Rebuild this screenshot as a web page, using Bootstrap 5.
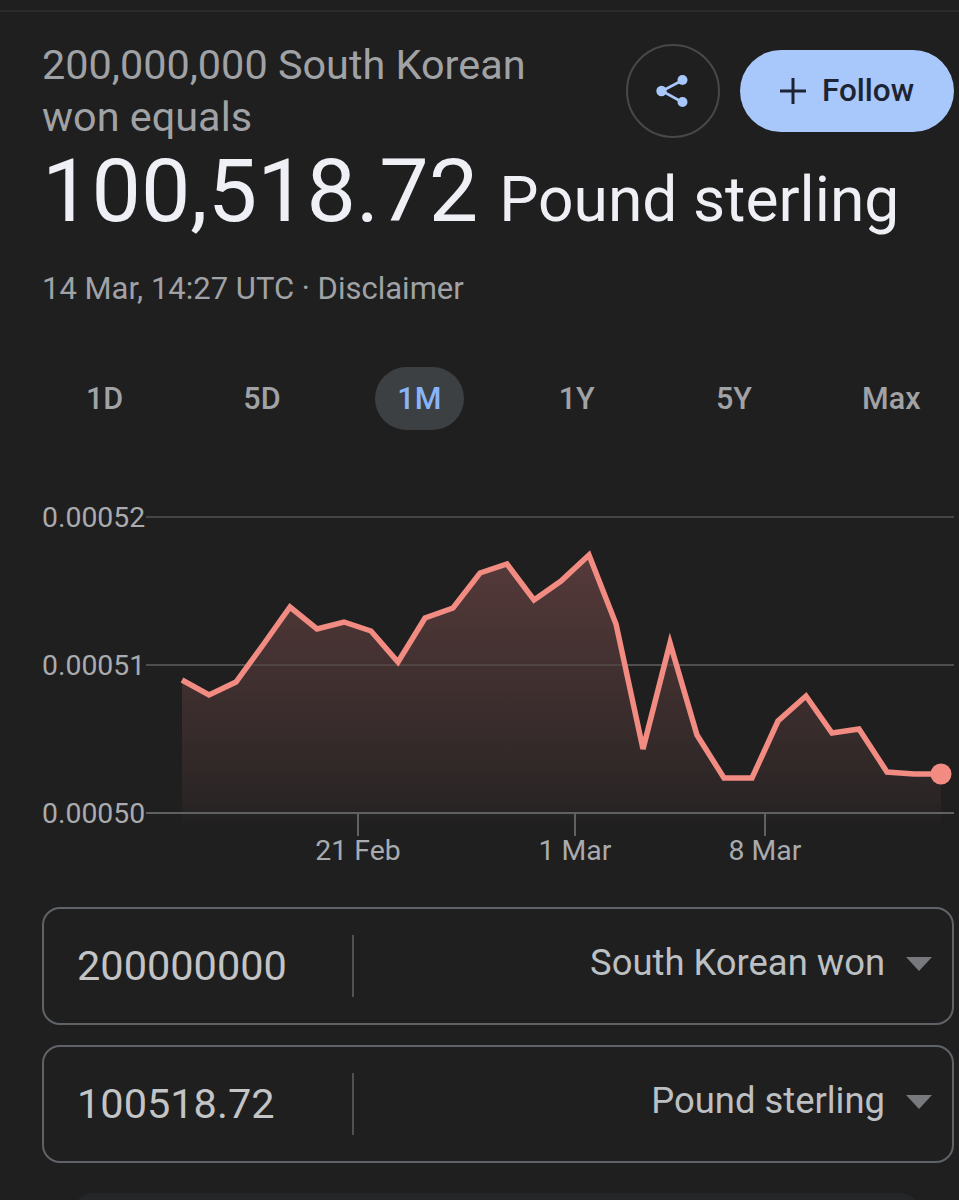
<!DOCTYPE html>
<html lang="en">
<head>
    <meta charset="UTF-8">
    <meta name="viewport" content="width=device-width, initial-scale=1.0">
    <title>200,000,000 South Korean won to Pound sterling</title>
    <link href="https://cdn.jsdelivr.net/npm/bootstrap@5.3.0/dist/css/bootstrap.min.css" rel="stylesheet">
    <style>
        body {
            background: #1f1f1f;
            color: #e8eaed;
            font-family: Roboto, "Liberation Sans", sans-serif;
            overflow-x: hidden;
        }
        .top-rule {
            height: 2px;
            margin-top: 10px;
            background: #2b2c2e;
        }
        .page-head {
            padding: 27px 5px 0 42px;
            height: 126px;
        }
        .pair-title {
            width: 500px;
            font-size: 41.4px;
            line-height: 52px;
            color: #a0a2a5;
        }
        .head-actions {
            margin-top: 5px;
        }
        .share-btn {
            width: 94px;
            height: 94px;
            border: 2px solid #474849;
            background: transparent;
        }
        .follow-btn {
            width: 214px;
            height: 82px;
            margin-left: 20px;
            background: #a8c7fa;
            border: 0;
            color: #1c2433;
            font-size: 31.5px;
            font-weight: 500;
        }
        .rate-line {
            padding-left: 42px;
            margin-top: -1px;
            height: 107px;
            white-space: nowrap;
            line-height: 107px;
            color: #eef0f5;
        }
        .rate-num { font-size: 88px; }
        .rate-cur { font-size: 62.3px; margin-left: 17px; }
        .rate-meta {
            padding-left: 42px;
            margin-top: 25px;
            font-size: 31px;
            line-height: 40px;
            color: #a0a2a5;
        }
        .range-row {
            width: 944px;
            margin: 58px 0 0 26px;
            font-size: 30.5px;
            font-weight: 500;
            color: #a0a2a5;
        }
        .range-pick {
            display: inline-block;
            line-height: 63px;
            padding: 0 18px;
        }
        .range-on {
            background: #3c4043;
            color: #8ab4f8;
            border-radius: 32px;
            padding: 0 22.5px;
        }
        .rate-chart {
            display: block;
            margin-top: 60px;
        }
        .rate-chart text {
            font-family: Roboto, "Liberation Sans", sans-serif;
            font-size: 28.4px;
            fill: #a9abae;
        }
        .conv-list {
            padding: 37px 5px 0 42px;
        }
        .conv-box {
            height: 118px;
            margin-bottom: 20px;
            border: 2px solid #5f6368;
            border-radius: 18px;
            padding-left: 33px;
            background: transparent;
        }
        .conv-val {
            width: 275px;
            font-size: 41.5px;
            color: #c2c4c6;
        }
        .conv-rule {
            width: 2px;
            height: 62px;
            background: #4f5254;
        }
        .conv-cur {
            font-size: 36.4px;
            color: #bdc0c3;
            margin-top: -6px;
        }
        .conv-arrow {
            width: 0;
            height: 0;
            margin: -4px 20px 0 21px;
            border-left: 13px solid transparent;
            border-right: 13px solid transparent;
            border-top: 14px solid #77797c;
        }
        .next-peek {
            height: 40px;
            margin: 30px 39px 0 73px;
            background: #252628;
            border-radius: 20px 20px 0 0;
        }
    </style>
</head>
<body>
    <div class="top-rule"></div>

    <div class="page-head d-flex align-items-start">
        <div class="pair-title">200,000,000 South Korean won equals</div>
        <div class="head-actions d-flex align-items-center ms-auto">
            <button type="button" class="btn rounded-circle share-btn d-flex align-items-center justify-content-center p-0" aria-label="Share">
                <svg width="36" height="36" viewBox="0 0 36 36">
                    <path d="M27 7.5 7 18 27 29" fill="none" stroke="#a8c7fa" stroke-width="2.6"/>
                    <circle cx="27.5" cy="7" r="5" fill="#a8c7fa"/>
                    <circle cx="6.5" cy="18" r="5.2" fill="#a8c7fa"/>
                    <circle cx="27.5" cy="29" r="5" fill="#a8c7fa"/>
                </svg>
            </button>
            <button type="button" class="btn rounded-pill follow-btn d-flex align-items-center justify-content-center p-0">
                <svg class="me-3" width="26" height="26" viewBox="0 0 26 26">
                    <path d="M13 0v26M0 13h26" fill="none" stroke="#1c2433" stroke-width="3"/>
                </svg>
                Follow
            </button>
        </div>
    </div>

    <div class="rate-line"><span class="rate-num">100,518.72</span> <span class="rate-cur">Pound sterling</span></div>
    <div class="rate-meta">14 Mar, 14:27 UTC · Disclaimer</div>

    <div class="row g-0 text-center range-row">
        <div class="col-2"><span class="range-pick">1D</span></div>
        <div class="col-2"><span class="range-pick">5D</span></div>
        <div class="col-2"><span class="range-pick range-on">1M</span></div>
        <div class="col-2"><span class="range-pick">1Y</span></div>
        <div class="col-2"><span class="range-pick">5Y</span></div>
        <div class="col-2"><span class="range-pick">Max</span></div>
    </div>

    <!-- viewBox keeps the page's y values, easier to read points off the picture -->
    <svg class="rate-chart" width="959" height="380" viewBox="0 490 959 380">
        <defs>
            <linearGradient id="areaFill" gradientUnits="userSpaceOnUse" x1="0" y1="555" x2="0" y2="828">
                <stop offset="0" stop-color="#563a3a"/>
                <stop offset="0.9" stop-color="#2b2525"/>
                <stop offset="1" stop-color="#1f1f1f"/>
            </linearGradient>
        </defs>

        <path d="M146 517H954M146 665H954" stroke="#434547" stroke-width="2"/>

        <polygon fill="url(#areaFill)" points="182,680 209,695 236,682 263,645 290,607 317,629 344,622 371,631 398,662 425,618 453,608 480,573 507,564 534,600 561,581 589,555 616,624 643,749 670,643 697,735 724,778 752,778 778,721 806,696 832,733 859,729 887,772 914,774 941,774 941,828 182,828"/>
        <path d="M146 665H954" stroke="#5a5553" stroke-width="2" opacity="0.55"/>
        <path d="M146 813H954M358 813V836M575 813V836M765 813V836" stroke="#5f6163" stroke-width="2"/>

        <polyline fill="none" stroke="#f28b82" stroke-width="5.5" points="182,680 209,695 236,682 263,645 290,607 317,629 344,622 371,631 398,662 425,618 453,608 480,573 507,564 534,600 561,581 589,555 616,624 643,749 670,643 697,735 724,778 752,778 778,721 806,696 832,733 859,729 887,772 914,774 941,774"/>
        <circle cx="941" cy="774" r="10.5" fill="#f28b82"/>

        <text x="42" y="527">0.00052</text>
        <text x="42" y="675">0.00051</text>
        <text x="42" y="823">0.00050</text>
        <text x="358" y="860" text-anchor="middle">21 Feb</text>
        <text x="575" y="860" text-anchor="middle">1 Mar</text>
        <text x="765" y="860" text-anchor="middle">8 Mar</text>
    </svg>

    <div class="conv-list">
        <div class="conv-box d-flex align-items-center">
            <div class="conv-val">200000000</div>
            <div class="conv-rule"></div>
            <div class="conv-cur ms-auto">South Korean won</div>
            <div class="conv-arrow"></div>
        </div>
        <div class="conv-box d-flex align-items-center">
            <div class="conv-val">100518.72</div>
            <div class="conv-rule"></div>
            <div class="conv-cur ms-auto">Pound sterling</div>
            <div class="conv-arrow"></div>
        </div>
    </div>
    <div class="next-peek"></div>

    <script src="https://cdn.jsdelivr.net/npm/bootstrap@5.3.0/dist/js/bootstrap.bundle.min.js"></script>
</body>
</html>
